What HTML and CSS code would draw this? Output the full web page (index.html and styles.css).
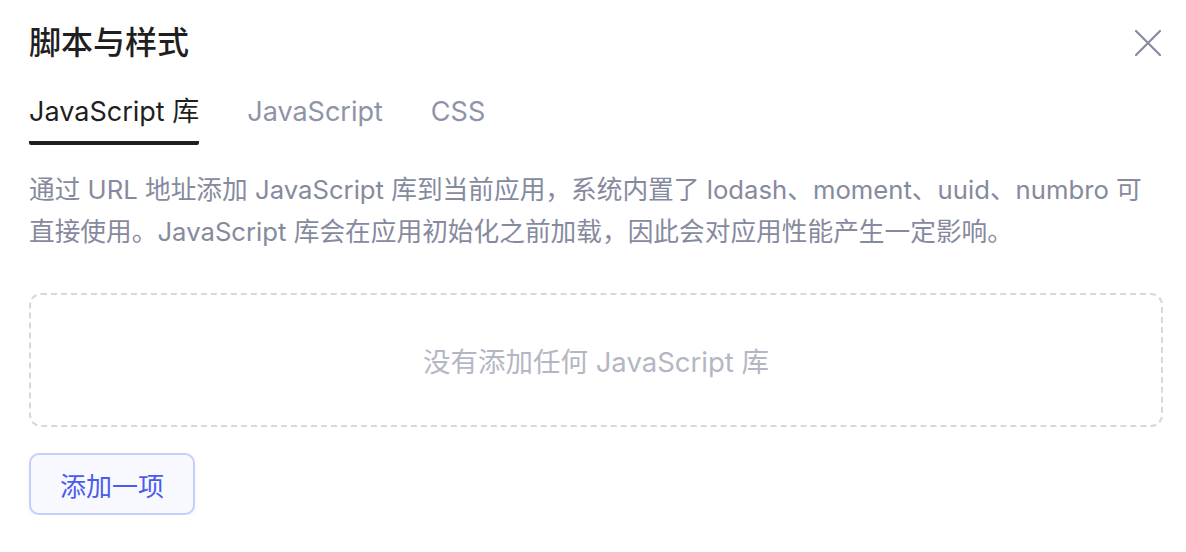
FILE: index.html
```html
<!DOCTYPE html>
<html lang="zh-CN">
<head>
<meta charset="utf-8">
<title>脚本与样式</title>
<link rel="stylesheet" href="styles.css">
</head>
<body>
<div class="dialog">
  <header class="header">
    <h1 class="title">脚本与样式</h1>
    <button class="close" aria-label="关闭">
      <svg viewBox="0 0 26 26" width="26" height="26"><path d="M1 1 L25 25 M25 1 L1 25" stroke="currentColor" stroke-width="2.2" stroke-linecap="round" fill="none"/></svg>
    </button>
  </header>
  <nav class="tabs">
    <span class="tab active">JavaScript 库</span>
    <span class="tab">JavaScript</span>
    <span class="tab">CSS</span>
  </nav>
  <p class="desc">通过 URL 地址添加 JavaScript 库到当前应用，系统内置了 lodash、moment、uuid、numbro 可<br>直接使用。JavaScript 库会在应用初始化之前加载，因此会对应用性能产生一定影响。</p>
  <div class="empty">没有添加任何 JavaScript 库</div>
  <button class="add">添加一项</button>
</div>
</body>
</html>
```

FILE: styles.css
```css
html, body {
  margin: 0;
  padding: 0;
  background: #ffffff;
}
body {
  font-family: Inter, "Noto Sans CJK SC", sans-serif;
}
.dialog {
  padding: 22px 23px 0 29px;
}
.header {
  display: flex;
  align-items: center;
  justify-content: space-between;
  height: 42px;
}
.title {
  margin: 0;
  font-size: 32px;
  font-weight: 500;
  color: #1f1f22;
  line-height: 42px;
}
.close {
  border: 0;
  background: none;
  padding: 0;
  margin-right: 2px;
  color: #878ba0;
  width: 26px;
  height: 26px;
  display: flex;
}
.tabs {
  display: flex;
  gap: 48px;
  margin-top: 28px;
}
.tab {
  font-size: 27px;
  line-height: 40px;
  padding-bottom: 9px;
  color: #8e93a8;
  border-bottom: 4px solid transparent;
}
.tab.active {
  color: #1f1f22;
  border-bottom-color: #1f1f22;
  border-radius: 0 0 2px 2px;
}
.desc {
  margin: 24px 0 0;
  font-size: 25.7px;
  line-height: 42px;
  color: #868a9e;
  white-space: nowrap;
}
.empty {
  margin-top: 40px;
  height: 134px;
  box-sizing: border-box;
  border: 2px dashed #d6d8df;
  border-radius: 12px;
  display: flex;
  align-items: center;
  justify-content: center;
  font-size: 27.5px;
  color: #b4b7c3;
}
.add {
  margin-top: 26px;
  height: 62px;
  width: 166px;
  box-sizing: border-box;
  border: 2px solid #c6cefc;
  border-radius: 10px;
  background: #f8f9ff;
  color: #4a5bf0;
  font-family: inherit;
  font-size: 26px;
  box-shadow: 0 2px 4px rgba(40, 50, 120, 0.05);
}
```
